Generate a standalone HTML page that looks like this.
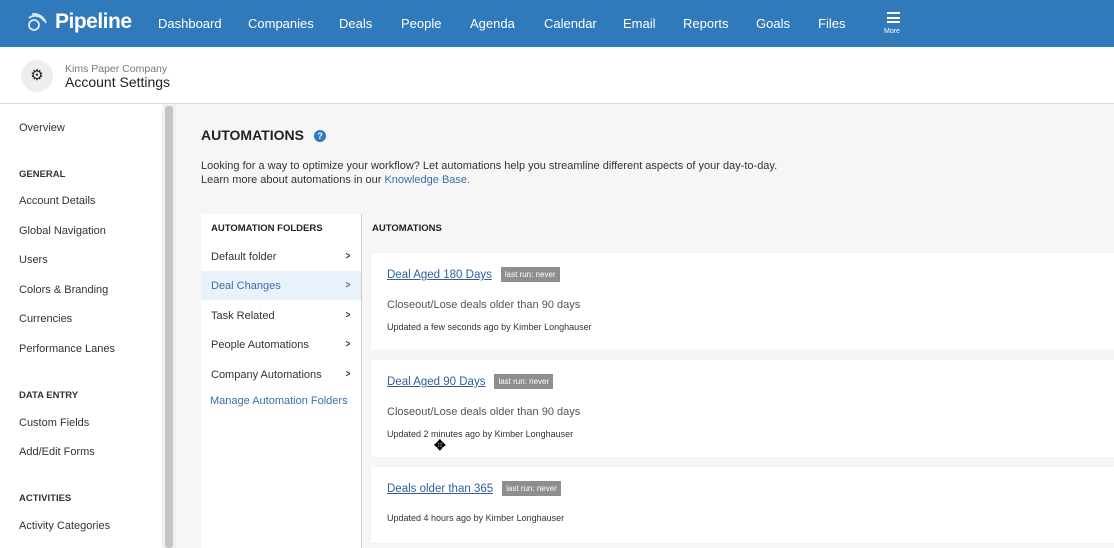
<!DOCTYPE html>
<html><head><style>
*{margin:0;padding:0;box-sizing:border-box}
body{width:1114px;height:548px;overflow:hidden;font-family:"Liberation Sans",sans-serif;background:#f6f6f6;position:relative;color:#333}
.hdr{position:absolute;left:0;top:0;width:1114px;height:47px;background:#3079bb}
.hdr .nav{position:absolute;top:16px;color:#fff;font-size:13px}
.logo{position:absolute;left:55px;top:10px;color:#fff;font-size:21px;font-weight:bold;letter-spacing:-0.5px}
.sub{position:absolute;left:0;top:47px;width:1114px;height:57px;background:#fff;border-bottom:1px solid #ddd}
.gear{position:absolute;left:21px;top:60px;width:32px;height:32px;border-radius:50%;background:#eee;color:#222;font-size:15px;text-align:center;line-height:32px}
.side{position:absolute;left:0;top:104px;width:162px;height:444px;background:#fff}
.side div{position:absolute;left:19px;font-size:11px;color:#333}
.side .h{font-weight:bold;font-size:9.5px}
.track{position:absolute;left:162px;top:104px;width:14px;height:444px;background:#f0f0f0}
.thumb{position:absolute;left:165px;top:106px;width:8px;height:442px;background:#c4c4c4;border-radius:3px}
.a{position:absolute;white-space:nowrap}
.fold{position:absolute;left:201px;top:214px;width:160px;height:334px;background:#fff}
.vline{position:absolute;left:361px;top:214px;width:1px;height:334px;background:#ccc}
.fi{position:absolute;left:201px;width:160px;height:29px;font-size:11px;padding:9px 0 0 10px;color:#333}
.fi span{position:absolute;right:10px;top:9px;font-weight:bold;font-size:10px;transform:scaleX(.8)}
.card{position:absolute;left:371px;width:743px;background:#fff;box-shadow:0 0 2px rgba(0,0,0,.05)}
.t{position:absolute;left:16px;font-size:11.5px;color:#2f5f99;text-decoration:underline}
.b{display:inline-block;background:#8e8e8e;color:#fff;font-size:8px;padding:3px 4px;margin-left:9px;vertical-align:1px;text-decoration:none}
.d{position:absolute;left:16px;font-size:11px;color:#555}
.u{position:absolute;left:16px;font-size:9px;color:#333}
</style></head><body>
<div class="hdr">
<svg style="position:absolute;left:25px;top:12px" width="22" height="22" viewBox="0 0 22 22" fill="none" stroke="#dce9f6" stroke-width="1.8"><circle cx="9" cy="13" r="5"/><path d="M4 6a10 10 0 0 1 15 3"/><path d="M7 2a13 13 0 0 1 14 9"/></svg>
<div class="logo">Pipeline</div>
<div class="nav" style="left:158px">Dashboard</div>
<div class="nav" style="left:248px">Companies</div>
<div class="nav" style="left:339px">Deals</div>
<div class="nav" style="left:401px">People</div>
<div class="nav" style="left:470px">Agenda</div>
<div class="nav" style="left:544px">Calendar</div>
<div class="nav" style="left:623px">Email</div>
<div class="nav" style="left:683px">Reports</div>
<div class="nav" style="left:756px">Goals</div>
<div class="nav" style="left:818px">Files</div>
<div style="position:absolute;left:887px;top:12px;width:13px;height:11px;border-top:2px solid #fff;border-bottom:2px solid #fff"><div style="margin-top:2.5px;height:2px;background:#fff"></div></div>
<div style="position:absolute;left:884px;top:28px;color:#fff;font-size:7px">More</div>
</div>
<div class="sub"></div>
<div class="gear">⚙</div>
<div class="a" style="left:65px;top:63px;font-size:10.5px;color:#777">Kims Paper Company</div>
<div class="a" style="left:65px;top:74px;font-size:14px;color:#222">Account Settings</div>
<div class="side">
<div style="top:18px">Overview</div>
<div class="h" style="top:65px">GENERAL</div>
<div style="top:91px">Account Details</div>
<div style="top:121px">Global Navigation</div>
<div style="top:150px">Users</div>
<div style="top:180px">Colors &amp; Branding</div>
<div style="top:209px">Currencies</div>
<div style="top:239px">Performance Lanes</div>
<div class="h" style="top:286px">DATA ENTRY</div>
<div style="top:313px">Custom Fields</div>
<div style="top:342px">Add/Edit Forms</div>
<div class="h" style="top:389px">ACTIVITIES</div>
<div style="top:416px">Activity Categories</div>
</div>
<div class="track"></div><div class="thumb"></div>
<div class="a" style="left:201px;top:127px;font-size:14px;font-weight:bold;color:#222">AUTOMATIONS</div>
<div style="position:absolute;left:314px;top:130px;width:12px;height:12px;border-radius:50%;background:#3079bb;color:#fff;font-size:9px;font-weight:bold;text-align:center;line-height:12px">?</div>
<div class="a" style="left:201px;top:160px;font-size:11px;color:#333">Looking for a way to optimize your workflow? Let automations help you streamline different aspects of your day-to-day.</div>
<div class="a" style="left:201px;top:174px;font-size:11px;color:#333">Learn more about automations in our <span style="color:#3a6fa8">Knowledge Base.</span></div>
<div class="fold"></div>
<div class="vline"></div>
<div class="a" style="left:211px;top:223px;font-size:9.5px;font-weight:bold;color:#222">AUTOMATION FOLDERS</div>
<div class="a" style="left:372px;top:223px;font-size:9.5px;font-weight:bold;color:#222">AUTOMATIONS</div>
<div class="fi" style="top:242px">Default folder<span>&gt;</span></div>
<div class="fi" style="top:271px;background:#e9f1fa;color:#3a6fa8">Deal Changes<span>&gt;</span></div>
<div class="fi" style="top:301px">Task Related<span>&gt;</span></div>
<div class="fi" style="top:330px">People Automations<span>&gt;</span></div>
<div class="fi" style="top:360px">Company Automations<span>&gt;</span></div>
<div class="a" style="left:210px;top:395px;font-size:11px;color:#3a6fa8">Manage Automation Folders</div>
<div class="card" style="top:253px;height:97px">
<div class="t" style="top:14px">Deal Aged 180 Days<span class="b">last run: never</span></div>
<div class="d" style="top:46px">Closeout/Lose deals older than 90 days</div>
<div class="u" style="top:69px">Updated a few seconds ago by Kimber Longhauser</div>
</div>
<div class="card" style="top:360px;height:97px">
<div class="t" style="top:14px">Deal Aged 90 Days<span class="b">last run: never</span></div>
<div class="d" style="top:46px">Closeout/Lose deals older than 90 days</div>
<div class="u" style="top:69px">Updated 2 minutes ago by Kimber Longhauser</div>
</div>
<div class="card" style="top:467px;height:76px">
<div class="t" style="top:14px">Deals older than 365<span class="b">last run: never</span></div>
<div class="u" style="top:46px">Updated 4 hours ago by Kimber Longhauser</div>
</div>
<div class="a" style="left:434px;top:437px;font-size:14px;font-weight:bold;color:#000">✥</div>
</body></html>
